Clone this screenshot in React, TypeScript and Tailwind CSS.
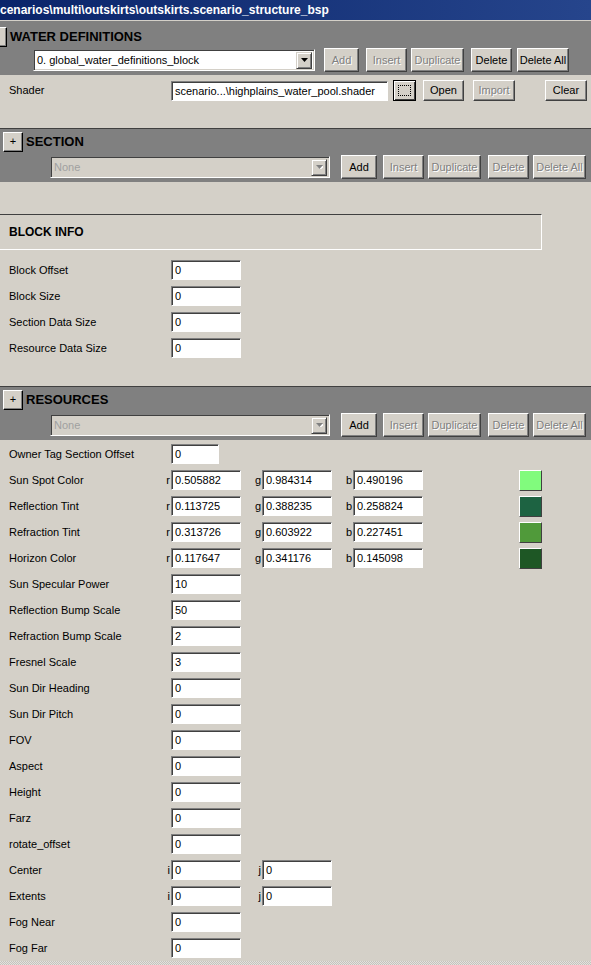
import React from 'react';

// classic win2k-style tag editor panel

const FONT = "font-['Liberation_Sans',Arial,sans-serif]";

type BtnProps = { label: string; w: string; disabled?: boolean; h?: string; className?: string };

const Btn: React.FC<BtnProps> = ({ label, w, disabled, h = 'h-[24px]', className = '' }) => (
  <button
    type="button"
    className={`${w} ${h} ${className} shrink-0 flex items-center justify-center bg-[#d4d0c8] border border-t-white border-l-white border-b-[#404040] border-r-[#404040] shadow-[inset_-1px_-1px_0_#808080] text-[11px] leading-none ${
      disabled ? 'text-[#808080] [text-shadow:1px_1px_0_#ffffff]' : 'text-black'
    }`}
  >
    {label}
  </button>
);

const Arrow: React.FC<{ disabled?: boolean }> = ({ disabled }) => (
  <div className="w-[16px] h-[17px] shrink-0 flex items-center justify-center bg-[#d4d0c8] border border-t-[#d4d0c8] border-l-[#d4d0c8] border-b-[#404040] border-r-[#404040] shadow-[inset_1px_1px_0_#ffffff,inset_-1px_-1px_0_#808080]">
    <svg width="7" height="4" viewBox="0 0 7 4">
      {disabled && <polygon points="1,1 8,1 4.5,5" fill="#ffffff" />}
      <polygon points="0,0 7,0 3.5,4" fill={disabled ? '#808080' : '#000000'} />
    </svg>
  </div>
);

const Dropdown: React.FC<{ text: string; w: string; disabled?: boolean; className?: string }> = ({ text, w, disabled, className = '' }) => (
  <div
    className={`${w} ${className} h-[22px] shrink-0 flex items-center justify-between border border-t-[#808080] border-l-[#808080] border-b-white border-r-white shadow-[inset_1px_1px_0_#404040,inset_-1px_-1px_0_#d4d0c8] pr-[2px] ${
      disabled ? 'bg-[#d4d0c8]' : 'bg-white'
    }`}
  >
    <span className={`pl-[3px] text-[11px] ${disabled ? 'text-[#a0a0a0]' : 'text-black'}`}>{text}</span>
    <Arrow disabled={disabled} />
  </div>
);

const Input: React.FC<{ value: string; w?: string }> = ({ value, w = 'w-[70px]' }) => (
  <div className={`${w} h-[20px] shrink-0 bg-white border border-t-[#808080] border-l-[#808080] border-b-white border-r-white shadow-[inset_1px_1px_0_#404040] pl-[3px] text-[11px] leading-[18px] text-black overflow-hidden whitespace-nowrap`}>
    {value}
  </div>
);

const BandHeader: React.FC<{ title: string }> = ({ title }) => (
  <div className="h-[54px] bg-[#808080] border-t border-t-[#404040] overflow-hidden">
    <div className="mt-[3px] h-[20px] flex items-center">
      <div className="ml-[3px] w-[20px] h-[20px] flex items-center justify-center bg-[#d4d0c8] border border-t-white border-l-white border-b-[#000000] border-r-[#000000] shadow-[inset_-1px_-1px_0_#808080] text-[11px] text-black leading-none pb-[1px]">
        +
      </div>
      <span className="ml-[3px] text-[13px] font-bold text-black">{title}</span>
    </div>
    <div className="mt-[3px] h-[24px] flex items-center">
      <Dropdown text="None" w="w-[280px]" disabled className="ml-[50px]" />
      <Btn label="Add" w="w-[36px]" className="ml-[11px]" />
      <Btn label="Insert" w="w-[41px]" disabled className="ml-[6px]" />
      <Btn label="Duplicate" w="w-[53px]" disabled className="ml-[4px]" />
      <Btn label="Delete" w="w-[41px]" disabled className="ml-[7px]" />
      <Btn label="Delete All" w="w-[53px]" disabled className="ml-[4px]" />
    </div>
  </div>
);

const Row: React.FC<{ label: string; children: React.ReactNode }> = ({ label, children }) => (
  <div className="h-[26px] flex items-center pl-[9px]">
    <span className="w-[150px] shrink-0 text-[11px] text-black whitespace-nowrap">{label}</span>
    {children}
  </div>
);

const Prefix: React.FC<{ ch?: string; w: string }> = ({ ch = '', w }) => (
  <span className={`${w} shrink-0 text-right pr-[1px] text-[11px] text-black`}>{ch}</span>
);

const SimpleRow: React.FC<{ label: string; value?: string; w?: string }> = ({ label, value = '0', w }) => (
  <Row label={label}>
    <Prefix w="w-[12px]" />
    <Input value={value} w={w} />
  </Row>
);

const ColorRow: React.FC<{ label: string; r: string; g: string; b: string; swatch: string }> = ({ label, r, g, b, swatch }) => (
  <Row label={label}>
    <Prefix ch="r" w="w-[12px]" />
    <Input value={r} />
    <Prefix ch="g" w="w-[21px]" />
    <Input value={g} />
    <Prefix ch="b" w="w-[21px]" />
    <Input value={b} />
    <div
      className="ml-[96px] w-[23px] h-[21px] shrink-0 border border-t-white border-l-white border-b-[#404040] border-r-[#404040]"
      style={{ backgroundColor: swatch }}
    />
  </Row>
);

const PairRow: React.FC<{ label: string }> = ({ label }) => (
  <Row label={label}>
    <Prefix ch="i" w="w-[12px]" />
    <Input value="0" />
    <Prefix ch="j" w="w-[21px]" />
    <Input value="0" />
  </Row>
);

const App: React.FC = () => {
  return (
    <div className={`${FONT} w-[591px] h-[965px] overflow-hidden bg-[#d4d0c8] flex flex-col`}>
      {/* title bar */}
      <div className="h-[20px] shrink-0 bg-linear-to-r from-[#0a246a] to-[#26458c] flex items-center text-white font-bold text-[12px] whitespace-nowrap overflow-hidden">
        cenarios\multi\outskirts\outskirts.scenario_structure_bsp
      </div>
      <div className="h-[1px] shrink-0 bg-[#d4d0c8]" />

      {/* water definitions */}
      <div className="h-[54px] shrink-0 bg-[#808080] overflow-hidden">
        <div className="mt-[6px] h-[20px] flex items-center">
          <div className="-ml-[13px] w-[20px] h-[20px] shrink-0 bg-[#d4d0c8] border border-t-white border-l-white border-b-[#000000] border-r-[#000000] shadow-[inset_-1px_-1px_0_#808080]" />
          <span className="ml-[3px] text-[13px] font-bold text-black">WATER DEFINITIONS</span>
        </div>
        <div className="mt-[1px] h-[24px] flex items-center">
          <Dropdown text="0. global_water_definitions_block" w="w-[282px]" className="ml-[33px]" />
          <Btn label="Add" w="w-[35px]" disabled className="ml-[9px]" />
          <Btn label="Insert" w="w-[41px]" disabled className="ml-[7px]" />
          <Btn label="Duplicate" w="w-[53px]" disabled className="ml-[4px]" />
          <Btn label="Delete" w="w-[41px]" className="ml-[7px]" />
          <Btn label="Delete All" w="w-[52px]" className="ml-[5px]" />
        </div>
      </div>

      {/* shader */}
      <div className="h-[53px] shrink-0 pt-[5px]">
        <div className="h-[21px] flex items-center pl-[9px]">
          <span className="w-[162px] shrink-0 text-[11px] text-black">Shader</span>
          <Input value="scenario...\highplains_water_pool.shader" w="w-[217px]" />
          <div className="ml-[5px] w-[23px] h-[21px] shrink-0 flex items-center justify-center bg-[#d4d0c8] border border-black shadow-[inset_1px_1px_0_#ffffff,inset_-1px_-1px_0_#404040]">
            <div className="w-[13px] h-[11px] border border-dotted border-black" />
          </div>
          <Btn label="Open" w="w-[41px]" h="h-[21px]" className="ml-[7px]" />
          <Btn label="Import" w="w-[42px]" h="h-[21px]" disabled className="ml-[9px]" />
          <Btn label="Clear" w="w-[42px]" h="h-[21px]" className="ml-[30px]" />
        </div>
      </div>

      <BandHeader title="SECTION" />

      {/* block info */}
      <div className="mt-[32px] w-[542px] h-[36px] shrink-0 flex items-center pl-[9px] border-t border-t-[#404040] border-b border-b-white border-r border-r-white">
        <span className="text-[12px] font-bold text-black">BLOCK INFO</span>
      </div>

      <div className="pt-[7px] shrink-0">
        <SimpleRow label="Block Offset" />
        <SimpleRow label="Block Size" />
        <SimpleRow label="Section Data Size" />
        <SimpleRow label="Resource Data Size" />
      </div>

      <div className="mt-[25px] shrink-0">
        <BandHeader title="RESOURCES" />
      </div>

      <div className="pt-[1px] shrink-0">
        <SimpleRow label="Owner Tag Section Offset" w="w-[48px]" />
        <ColorRow label="Sun Spot Color" r="0.505882" g="0.984314" b="0.490196" swatch="#81fb7d" />
        <ColorRow label="Reflection Tint" r="0.113725" g="0.388235" b="0.258824" swatch="#1d6342" />
        <ColorRow label="Refraction Tint" r="0.313726" g="0.603922" b="0.227451" swatch="#509a3a" />
        <ColorRow label="Horizon Color" r="0.117647" g="0.341176" b="0.145098" swatch="#1e5725" />
        <SimpleRow label="Sun Specular Power" value="10" />
        <SimpleRow label="Reflection Bump Scale" value="50" />
        <SimpleRow label="Refraction Bump Scale" value="2" />
        <SimpleRow label="Fresnel Scale" value="3" />
        <SimpleRow label="Sun Dir Heading" />
        <SimpleRow label="Sun Dir Pitch" />
        <SimpleRow label="FOV" />
        <SimpleRow label="Aspect" />
        <SimpleRow label="Height" />
        <SimpleRow label="Farz" />
        <SimpleRow label="rotate_offset" />
        <PairRow label="Center" />
        <PairRow label="Extents" />
        <SimpleRow label="Fog Near" />
        <SimpleRow label="Fog Far" />
      </div>

      <div className="flex-1 bg-[image:repeating-conic-gradient(#c4c2bc_0%_25%,#e4e2de_0%_50%)] bg-[length:2px_2px]" />
    </div>
  );
};

export default App;
